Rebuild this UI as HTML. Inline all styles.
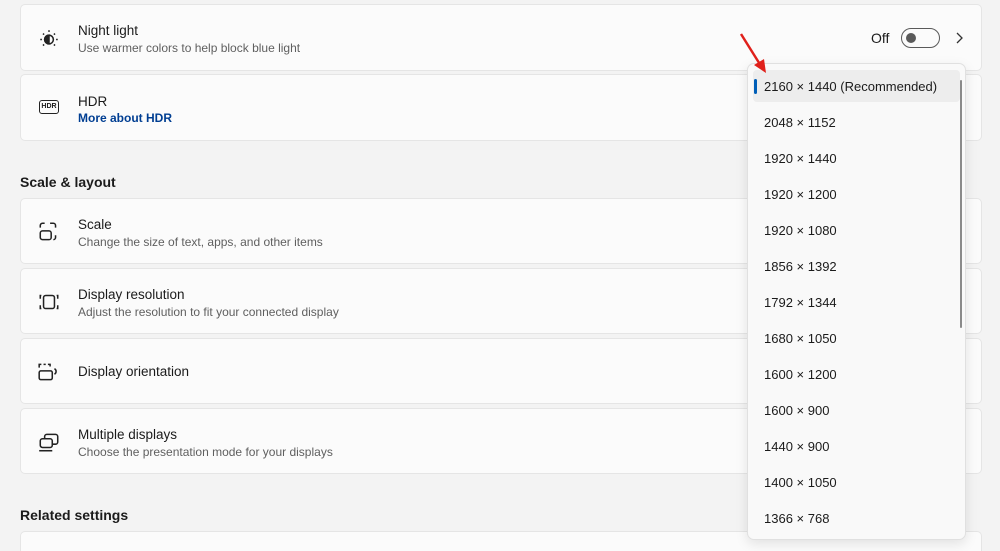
<!DOCTYPE html>
<html><head><style>
html,body{margin:0;height:551px;overflow:hidden}
body{width:1000px;background:#f3f3f3;font-family:"Liberation Sans",sans-serif;position:relative;color:#1b1b1b}
.card{position:absolute;left:20px;width:962px;background:#fbfbfb;border:1px solid #e5e5e5;border-radius:5px;box-sizing:border-box}
.t{position:absolute;left:57px;font-size:13.5px;color:#1b1b1b}
.s{position:absolute;left:57px;font-size:12px;color:#5f5f5f}
.ic{position:absolute;left:16px}
.h{position:absolute;left:20px;font-size:14px;font-weight:600}
.dd{position:absolute;left:747px;top:63px;width:219px;height:477px;background:#f9f9f9;border:1px solid #e0e0e0;border-radius:7px;box-sizing:border-box;box-shadow:0 4px 12px rgba(0,0,0,.1)}
.it{position:absolute;left:16px;font-size:13px;color:#1b1b1b}
</style></head><body>
<div class="card" style="top:4px;height:67px">
<svg class="ic" style="top:22px" width="24" height="24" viewBox="0 0 22 22" fill="none" stroke="#222" stroke-width="1.4"><circle cx="11" cy="11.5" r="4"/><path d="M11 7.5a4 4 0 0 0 0 8z" fill="#222"/><path d="M11 3v1.5M3 11.5h1.5M17.5 11.5H19M5.5 6l1 1M16.5 6l-1 1M5.5 17l1-1M16.5 17l-1-1"/></svg>
<div class="t" style="top:18px">Night light</div><div class="s" style="top:36px">Use warmer colors to help block blue light</div>
<div style="position:absolute;left:850px;top:25px;font-size:14px">Off</div>
<div style="position:absolute;left:880px;top:23px;width:39px;height:20px;border:1px solid #5a5a5a;border-radius:10px;box-sizing:border-box"><div style="position:absolute;left:4px;top:4px;width:10px;height:10px;border-radius:50%;background:#5a5a5a"></div></div>
<svg style="position:absolute;left:934px;top:27px" width="8" height="12" viewBox="0 0 8 12" fill="none" stroke="#333" stroke-width="1.3"><path d="M2 1l5 5-5 5"/></svg>
</div>
<div class="card" style="top:74px;height:67px">
<div class="ic" style="top:25px;left:18px;width:18px;height:12px;border:1.5px solid #222;border-radius:3px;font-size:7px;font-weight:bold;text-align:center;line-height:12px">HDR</div>
<div class="t" style="top:19px">HDR</div><div class="s" style="top:36px;color:#003e92;font-weight:bold">More about HDR</div>
</div>
<div class="h" style="top:174px">Scale &amp; layout</div>
<div class="card" style="top:198px;height:66px">
<svg class="ic" style="top:21px" width="24" height="24" viewBox="0 0 22 22" fill="none" stroke="#222" stroke-width="1.4"><rect x="3" y="10" width="10" height="8" rx="2"/><path d="M3 7V5a2 2 0 0 1 2-2h2M12 3h3a2 2 0 0 1 2 2v2M17 14v2a2 2 0 0 1-2 2"/></svg>
<div class="t" style="top:18px">Scale</div><div class="s" style="top:36px">Change the size of text, apps, and other items</div></div>
<div class="card" style="top:268px;height:66px">
<svg class="ic" style="top:21px" width="24" height="24" viewBox="0 0 22 22" fill="none" stroke="#222" stroke-width="1.4"><rect x="6" y="5" width="10" height="12" rx="2"/><path d="M4 5H3v3M3 14v3h1M18 5h1v3M19 14v3h-1"/></svg>
<div class="t" style="top:18px">Display resolution</div><div class="s" style="top:36px">Adjust the resolution to fit your connected display</div></div>
<div class="card" style="top:338px;height:66px">
<svg class="ic" style="top:21px" width="24" height="24" viewBox="0 0 22 22" fill="none" stroke="#222" stroke-width="1.4"><rect x="2" y="10" width="12" height="8" rx="1.5"/><path d="M2 7V4h2M6 4h2M10 4h2v2M16 8c2 1 2 4 0 5"/></svg>
<div class="t" style="top:25px">Display orientation</div></div>
<div class="card" style="top:408px;height:66px">
<svg class="ic" style="top:21px" width="24" height="24" viewBox="0 0 22 22" fill="none" stroke="#222" stroke-width="1.4"><rect x="7" y="4" width="12" height="9" rx="2"/><rect x="3" y="8" width="11" height="8" rx="2" fill="#fbfbfb"/><path d="M2 19h12"/></svg>
<div class="t" style="top:18px">Multiple displays</div><div class="s" style="top:36px">Choose the presentation mode for your displays</div></div>
<div class="h" style="top:507px">Related settings</div>
<div class="card" style="top:531px;height:20px;border-bottom:none;border-radius:5px 5px 0 0"></div>
<div class="dd">
<div style="position:absolute;left:5px;top:6px;width:207px;height:32px;background:#ededed;border-radius:4px"></div>
<div style="position:absolute;left:6px;top:15px;width:3px;height:15px;background:#005fb8;border-radius:2px"></div>
<div style="position:absolute;left:212px;top:16px;width:2px;height:248px;background:#8a8a8a;border-radius:1px"></div>
<div class="it" style="top:15px">2160 × 1440 (Recommended)</div>
<div class="it" style="top:51px">2048 × 1152</div>
<div class="it" style="top:87px">1920 × 1440</div>
<div class="it" style="top:123px">1920 × 1200</div>
<div class="it" style="top:159px">1920 × 1080</div>
<div class="it" style="top:195px">1856 × 1392</div>
<div class="it" style="top:231px">1792 × 1344</div>
<div class="it" style="top:267px">1680 × 1050</div>
<div class="it" style="top:303px">1600 × 1200</div>
<div class="it" style="top:339px">1600 × 900</div>
<div class="it" style="top:375px">1440 × 900</div>
<div class="it" style="top:411px">1400 × 1050</div>
<div class="it" style="top:447px">1366 × 768</div>
</div>
<svg style="position:absolute;left:0;top:0" width="1000" height="100"><path d="M741 34L761 66" stroke="#e0201b" stroke-width="2.5"/><path d="M766 73L754 65L764 59Z" fill="#e0201b"/></svg>
</body></html>
